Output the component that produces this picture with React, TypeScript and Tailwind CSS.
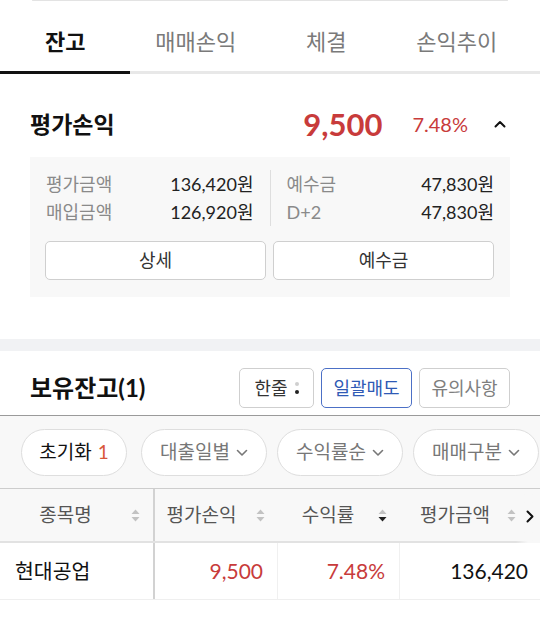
import React from 'react';

const RED = 'text-[#c83b3b]';

const SortIcon: React.FC<{ active?: 'down' | 'up' }> = ({ active }) => (
  <svg width="9" height="13" viewBox="0 0 9 13" className="shrink-0">
    <path d="M4.5 0.5 L8.5 5 H0.5 Z" fill={active === 'up' ? '#222' : '#c2c2c2'} />
    <path d="M4.5 12.5 L8.5 8 H0.5 Z" fill={active === 'down' ? '#222' : '#c2c2c2'} />
  </svg>
);

const ChevronDown: React.FC = () => (
  <svg width="12" height="8" viewBox="0 0 12 8" className="shrink-0">
    <path d="M1.5 1.5 L6 6 L10.5 1.5" fill="none" stroke="#777" strokeWidth="1.6" strokeLinecap="round" strokeLinejoin="round" />
  </svg>
);

const tabs = ['잔고', '매매손익', '체결', '손익추이'];

const App: React.FC = () => {
  return (
    <div className="w-[540px] h-[627px] overflow-hidden bg-white font-['Lato','Noto_Sans_CJK_KR',sans-serif] text-[#222]">
      {/* top edge of previous panel */}
      <div className="mx-[32px] h-px bg-[#e3e3e3] rounded-full" />

      {/* tabs */}
      <div>
        <div className="grid grid-cols-[130.5px_130.5px_130.5px_130.5px] h-[70px] pt-[10px]">
          {tabs.map((t, i) => (
            <div
              key={t}
              className={
                'flex items-center justify-center text-[22px] ' +
                (i === 0 ? 'font-bold text-[#111]' : 'text-[#7a7a7a]')
              }
            >
              {t}
            </div>
          ))}
        </div>
        <div className="h-[3px] bg-[#e8e8e8]">
          <div className="h-[3px] w-[130px] bg-[#111]" />
        </div>
      </div>

      {/* 평가손익 */}
      <div className="pt-[34px] px-[30px]">
        <div className="flex items-center h-[32px]">
          <div className="text-[23px] font-bold text-[#111]">평가손익</div>
          <div className="ml-auto flex items-center">
            <span className={`text-[31px] font-bold ${RED}`}>9,500</span>
            <span className={`ml-[30px] text-[20px] ${RED}`}>7.48%</span>
            <svg width="12" height="8" viewBox="0 0 12 8" className="ml-[26px] mr-[4px]">
              <path d="M1.5 6.5 L6 2 L10.5 6.5" fill="none" stroke="#111" strokeWidth="2" strokeLinecap="round" strokeLinejoin="round" />
            </svg>
          </div>
        </div>
      </div>

      <div className="mx-[30px] mt-[17px] bg-[#f8f8f8] px-[16px] pt-[13px] pb-[17px]">
        <div className="grid grid-cols-[1fr_1px_1fr] gap-x-[16px]">
          <div className="flex flex-col">
            <div className="flex items-center justify-between h-[28px]">
              <span className="text-[18px] text-[#8a8a8a]">평가금액</span>
              <span className="text-[18px] text-[#222]">136,420원</span>
            </div>
            <div className="flex items-center justify-between h-[28px]">
              <span className="text-[18px] text-[#8a8a8a]">매입금액</span>
              <span className="text-[18px] text-[#222]">126,920원</span>
            </div>
          </div>
          <div className="bg-[#dedede]" />
          <div className="flex flex-col">
            <div className="flex items-center justify-between h-[28px]">
              <span className="text-[18px] text-[#8a8a8a]">예수금</span>
              <span className="text-[18px] text-[#222]">47,830원</span>
            </div>
            <div className="flex items-center justify-between h-[28px]">
              <span className="text-[18px] text-[#8a8a8a]">D+2</span>
              <span className="text-[18px] text-[#222]">47,830원</span>
            </div>
          </div>
        </div>
        <div className="mt-[15px] grid grid-cols-2 gap-x-[7px] -ml-px">
          <button className="h-[39px] rounded-[5px] border border-[#cfcfcf] bg-white text-[18px] text-[#333]">상세</button>
          <button className="h-[39px] rounded-[5px] border border-[#cfcfcf] bg-white text-[18px] text-[#333]">예수금</button>
        </div>
      </div>

      {/* section gap */}
      <div className="h-[42px]" />
      <div className="h-[12px] bg-[#f1f2f4]" />

      {/* 보유잔고 */}
      <div className="flex items-center px-[30px] pt-[17px] pb-[7px]">
        <div className="text-[24px] font-bold text-[#111]">보유잔고(1)</div>
        <div className="ml-auto flex items-center gap-x-[7px]">
          <button className="h-[40px] w-[75px] rounded-[5px] border border-[#cfcfcf] bg-white flex items-center justify-center gap-x-[7px] text-[18px] text-[#333]">
            한줄
            <span className="flex flex-col gap-y-[4px]">
              <span className="w-[4px] h-[4px] rounded-full bg-[#cfcfcf]" />
              <span className="w-[4px] h-[4px] rounded-full bg-[#222]" />
            </span>
          </button>
          <button className="h-[40px] w-[91px] rounded-[5px] border border-[#4c70c6] bg-white text-[18px] text-[#2f5ab5]">일괄매도</button>
          <button className="h-[40px] w-[91px] rounded-[5px] border border-[#cfcfcf] bg-white text-[18px] text-[#7e7e7e]">유의사항</button>
        </div>
      </div>
      <div className="h-px bg-[#9a9a9a]" />

      {/* filter chips */}
      <div className="bg-[#f8f8f8] pt-[13px] pb-[12px] flex items-center whitespace-nowrap">
        <div className="ml-[21px] h-[47px] w-[106px] shrink-0 rounded-full border border-[#dedede] bg-white flex items-center justify-center text-[19px] text-[#111]">
          초기화<span className="ml-[6px] text-[#d8573a]">1</span>
        </div>
        <div className="ml-[14px] flex gap-x-[10px]">
          {['대출일별', '수익률순', '매매구분'].map((c) => (
            <div
              key={c}
              className="h-[47px] w-[126px] shrink-0 rounded-full border border-[#dedede] bg-white flex items-center justify-center gap-x-[6px] text-[19px] text-[#777]"
            >
              {c}
              <ChevronDown />
            </div>
          ))}
        </div>
      </div>
      <div className="h-px bg-[#cdcdcd]" />

      {/* table */}
      <div className="relative">
        <div className="flex h-[54px] bg-[#f8f8f8] border-b-2 border-[#e2e2e2] text-[19px] text-[#555]">
          <div className="w-[155px] shrink-0 flex items-center pr-[13px] border-r-2 border-[#d2d2d2]">
            <span className="flex-1 text-center">종목명</span>
            <SortIcon />
          </div>
          <div className="w-[123px] shrink-0 flex items-center pr-[13px]">
            <span className="flex-1 text-center -ml-[8px]">평가손익</span>
            <SortIcon />
          </div>
          <div className="w-[122px] shrink-0 flex items-center pr-[13px]">
            <span className="flex-1 text-center">수익률</span>
            <SortIcon active="down" />
          </div>
          <div className="w-[140px] shrink-0 flex items-center">
            <span className="pl-[20px]">평가금액</span>
            <span className="ml-[17px]">
              <SortIcon />
            </span>
          </div>
        </div>
        <div className="absolute right-0 top-0 h-[54px] w-[24px] flex items-center justify-end pr-[6px] bg-gradient-to-r from-[#f8f8f8]/0 via-[#f8f8f8] to-[#f8f8f8]">
          <svg width="8" height="13" viewBox="0 0 8 13">
            <path d="M1.5 1.5 L6.5 6.5 L1.5 11.5" fill="none" stroke="#111" strokeWidth="2" strokeLinecap="round" strokeLinejoin="round" />
          </svg>
        </div>
        <div className="flex h-[57px] border-b border-[#efefef] text-[21px]">
          <div className="w-[155px] shrink-0 flex items-center pl-[15px] border-r-2 border-[#d2d2d2] text-[20.5px] text-[#111]">현대공업</div>
          <div className={`w-[123px] shrink-0 flex items-center justify-end pr-[14px] border-r border-[#f0f0f0] ${RED}`}>9,500</div>
          <div className={`w-[122px] shrink-0 flex items-center justify-end pr-[14px] border-r border-[#f0f0f0] ${RED}`}>7.48%</div>
          <div className="w-[140px] shrink-0 flex items-center justify-end pr-[12px] text-[#111]">136,420</div>
        </div>
      </div>
    </div>
  );
};

export default App;
